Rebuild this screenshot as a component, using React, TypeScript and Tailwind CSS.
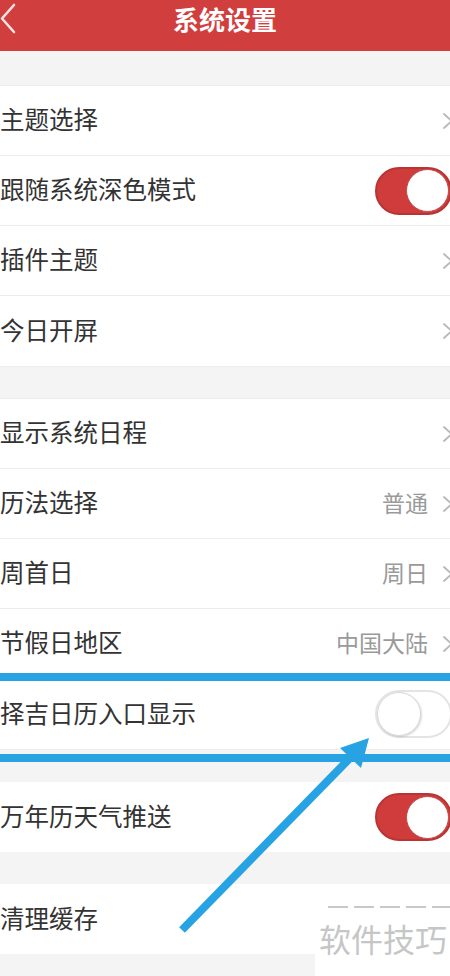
import React from "react";

const FONT = { fontFamily: '"Noto Sans CJK SC", "Noto Sans", sans-serif' };

function Chevron() {
  return (
    <svg width="12" height="20" viewBox="0 0 12 20" className="-mr-[4px] ml-[14px] shrink-0">
      <path d="M2 3 L9.5 10 L2 17" fill="none" stroke="#b8b8b8" strokeWidth="1.8" strokeLinecap="round" strokeLinejoin="round" />
    </svg>
  );
}

function Toggle({ on }: { on: boolean }) {
  if (on) {
    return (
      <div className="w-[77px] h-[48px] rounded-full bg-[#d03b3b] border-2 border-[#b83535] -mr-[2px] flex items-center justify-end shrink-0">
        <div className="w-[43px] h-[43px] rounded-full bg-white border border-[#c04a4a] mr-[1px]" />
      </div>
    );
  }
  return (
    <div className="w-[77px] h-[48px] rounded-full bg-white border-2 border-[#e4e4e4] -mr-[2px] flex items-center justify-start shrink-0">
      <div className="w-[44px] h-[44px] rounded-full bg-white border border-[#d8d8d8] shadow-[1px_1px_2px_rgba(0,0,0,0.15)]" />
    </div>
  );
}

type Row = { label: string; value?: string; toggle?: boolean; chevron?: boolean; last?: boolean };

function SettingRow({ label, value, toggle, chevron, last }: Row) {
  return (
    <div className={`h-[70px] bg-white flex items-center justify-between ${last ? "" : "border-b border-[#ececec]"}`}>
      <span className="text-[24.5px] leading-none text-[#333333] -mt-[2px]">{label}</span>
      <div className="flex items-center">
        {value && <span className="text-[23px] leading-none text-[#9a9a9a] -mt-[2px]">{value}</span>}
        {toggle !== undefined && <Toggle on={toggle} />}
        {chevron && <Chevron />}
      </div>
    </div>
  );
}

export default function App() {
  return (
    <div className="w-[450px] h-[976px] bg-[#f4f4f4] relative overflow-hidden" style={FONT}>
      {/* header */}
      <div className="h-[51px] bg-[#d13e3e] relative flex justify-center">
        <svg width="18" height="36" viewBox="0 0 18 36" className="absolute left-0 top-[1px]">
          <path d="M14 4 L2 17.5 L14 31" fill="none" stroke="#f6e2e2" strokeWidth="2.6" strokeLinecap="round" strokeLinejoin="round" />
        </svg>
        <span className="text-[26px] font-bold text-white leading-[38px]">系统设置</span>
      </div>

      <div className="h-[34px]" />
      <div className="border-t border-[#ececec]">
        <SettingRow label="主题选择" chevron />
        <SettingRow label="跟随系统深色模式" toggle={true} />
        <SettingRow label="插件主题" chevron />
        <SettingRow label="今日开屏" chevron last />
      </div>

      <div className="h-[32px] border-t border-[#ececec]" />
      <div className="border-t border-[#ececec]">
        <SettingRow label="显示系统日程" chevron />
        <SettingRow label="历法选择" value="普通" chevron />
        <SettingRow label="周首日" value="周日" chevron />
        <SettingRow label="节假日地区" value="中国大陆" chevron />
        <SettingRow label="择吉日历入口显示" toggle={false} last />
      </div>

      <div className="h-[33px] border-t border-[#ececec]" />
      <SettingRow label="万年历天气推送" toggle={true} last />

      <div className="h-[32px]" />
      <SettingRow label="清理缓存" last />

      {/* blue highlight lines */}
      <div className="absolute left-0 top-[673px] w-full h-[8px] bg-[#27a3e3]" />
      <div className="absolute left-0 top-[754px] w-full h-[8px] bg-[#27a3e3]" />

      {/* blue arrow */}
      <svg width="450" height="976" viewBox="0 0 450 976" className="absolute left-0 top-0 pointer-events-none">
        <line x1="182" y1="930" x2="352" y2="756" stroke="#27a3e3" strokeWidth="8" />
        <polygon points="369,738 361,768 340,748" fill="#27a3e3" />
      </svg>

      {/* watermark */}
      <div className="absolute left-[315px] top-[898px] w-[135px] h-[78px] bg-white flex flex-col items-start">
        <div className="ml-[13px] mt-[8px] w-[125px] h-[2px] bg-[repeating-linear-gradient(90deg,#c8c8c8_0px,#c8c8c8_20px,transparent_20px,transparent_26px)]" />
        <span className="ml-[4px] mt-[14px] text-[32px] leading-none text-[#c6c6c6]">软件技巧</span>
      </div>
    </div>
  );
}
